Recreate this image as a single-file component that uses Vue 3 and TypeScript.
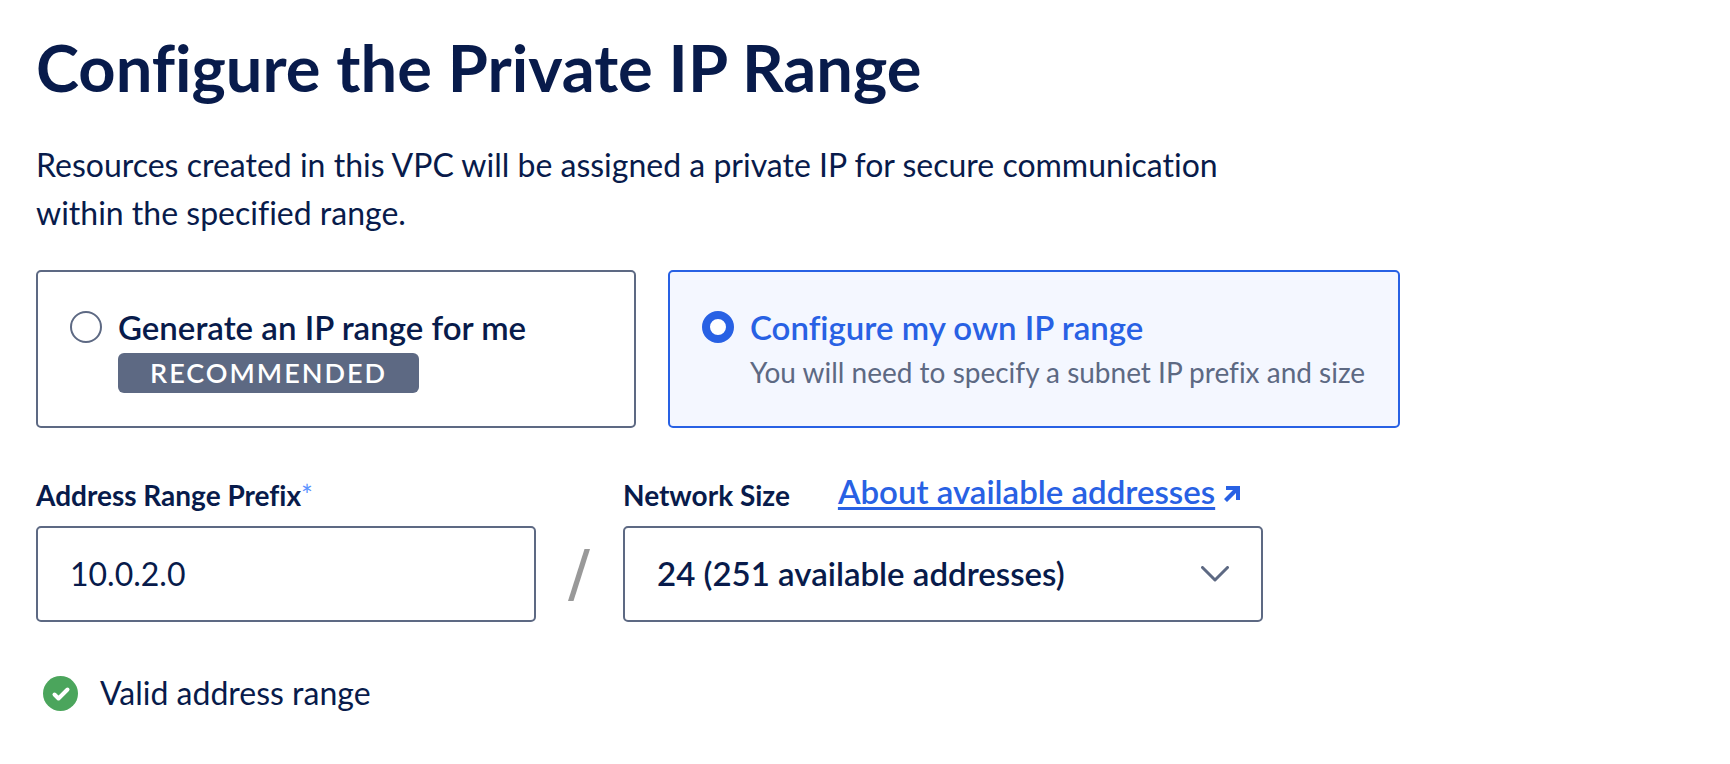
<script setup lang="ts">
import { ref } from 'vue'

type RangeMode = 'generate' | 'custom'

const mode = ref<RangeMode>('custom')
const prefix = ref('10.0.2.0')
const networkSize = ref(24)
const sizes = [
  { bits: 24, available: 251 },
  { bits: 25, available: 123 },
  { bits: 26, available: 59 },
]
</script>

<template>
  <main class="page">
    <h1 class="title">Configure the Private IP Range</h1>
    <p class="intro">
      Resources created in this VPC will be assigned a private IP for secure communication within the
      specified range.
    </p>

    <div class="options" role="radiogroup" aria-label="IP range">
      <label class="card" :class="{ selected: mode === 'generate' }">
        <input v-model="mode" class="radio" type="radio" name="mode" value="generate" />
        <span class="card-body">
          <span class="card-title">Generate an IP range for me</span>
          <span class="badge">RECOMMENDED</span>
        </span>
      </label>
      <label class="card" :class="{ selected: mode === 'custom' }">
        <input v-model="mode" class="radio" type="radio" name="mode" value="custom" />
        <span class="card-body">
          <span class="card-title">Configure my own IP range</span>
          <span class="card-note">You will need to specify a subnet IP prefix and size</span>
        </span>
      </label>
    </div>

    <div class="fields">
      <div class="field prefix-field">
        <div class="field-head">
          <label class="field-label" for="prefix">Address Range Prefix<span class="star">*</span></label>
        </div>
        <input id="prefix" v-model="prefix" class="control" type="text" />
      </div>
      <svg class="slash" viewBox="0 0 24 54" aria-hidden="true">
        <path d="M17.5 1H23L6.500 53H1z" fill="#999" />
      </svg>
      <div class="field size-field">
        <div class="field-head">
          <label class="field-label" for="size">Network Size</label>
          <a class="link" href="#"><span class="link-text">About available addresses</span><svg class="arrow" viewBox="0 0 18 18" aria-hidden="true">
              <path d="M3 1H17V15H13V8L4 17L1 14L10 5H3z" fill="currentColor" />
            </svg></a>
        </div>
        <div class="select-wrap">
          <select id="size" v-model="networkSize" class="control select">
            <option v-for="s in sizes" :key="s.bits" :value="s.bits">
              {{ s.bits }} ({{ s.available }} available addresses)
            </option>
          </select>
          <svg class="chevron" viewBox="0 0 28 16" aria-hidden="true">
            <path d="M1.500 1.500L14 14L26.500 1.500" fill="none" stroke="#5d6983" stroke-width="3" stroke-linecap="round" stroke-linejoin="round" />
          </svg>
        </div>
      </div>
    </div>

    <p class="status" role="status">
      <svg class="check" viewBox="0 0 35 35" aria-hidden="true">
        <circle cx="17.500" cy="17.500" r="17.500" fill="#4ba55c" />
        <path d="M11.500 18.500L15.500 22.500L24.500 13.500" fill="none" stroke="#fff" stroke-width="4" stroke-linecap="round" stroke-linejoin="round" />
      </svg>
      <span>Valid address range</span>
    </p>
  </main>
</template>

<style>
body {
  margin: 0;
  background: #fff;
}
</style>

<style scoped>
.page {
  box-sizing: border-box;
  padding: 29px 36px;
  color: #081b4b;
  font-family: Lato, "Liberation Sans", sans-serif;
  font-size: 32px;
  line-height: 48px;
  font-variant-ligatures: none;
}
.title {
  margin: 0;
  font-size: 65px;
  line-height: 76px;
  font-weight: 700;
}
.intro {
  max-width: 1240px;
  margin: 36px 0 0;
}
.options {
  display: grid;
  grid-template-columns: minmax(0, 600px) minmax(0, 732px);
  gap: 32px;
  margin-top: 33px;
}
.card {
  box-sizing: border-box;
  display: flex;
  gap: 16px;
  min-height: 158px;
  padding: 31px 32px;
  border: 2px solid #5d6983;
  border-radius: 5px;
}
.card.selected {
  border-color: #2861e4;
  background: #f4f7ff;
}
.radio {
  appearance: none;
  box-sizing: border-box;
  flex: none;
  width: 32px;
  height: 32px;
  margin: 8px 0 0;
  border: 2px solid #5d6983;
  border-radius: 50%;
  background: #fff;
}
.radio:checked {
  border: 8px solid #2861e4;
}
.card-body {
  display: flex;
  flex-direction: column;
  align-items: flex-start;
  gap: 2px;
}
.card-title {
  font-size: 33px;
  font-weight: 600;
}
.selected .card-title {
  color: #2861e4;
}
.badge {
  padding: 0 32px;
  border-radius: 6px;
  background: #5d6983;
  color: #fff;
  font-size: 27px;
  line-height: 40px;
  font-weight: 600;
  letter-spacing: 2px;
}
.card-note {
  color: #5d6983;
  font-size: 28px;
  line-height: 38px;
  white-space: nowrap;
}
.fields {
  display: flex;
  align-items: flex-end;
  margin-top: 42px;
}
.field {
  min-width: 0;
}
.prefix-field {
  flex: 0 1 500px;
}
.size-field {
  flex: 0 1 640px;
}
.field-head {
  display: flex;
  align-items: flex-start;
  gap: 48px;
  height: 56px;
  white-space: nowrap;
}
.field-label {
  font-size: 28px;
  line-height: 50px;
  font-weight: 700;
}
.star {
  color: #5b93ff;
  font-weight: 400;
}
.link {
  display: inline-flex;
  align-items: center;
  gap: 8px;
  color: #2861e4;
  font-size: 33px;
  line-height: 42px;
  font-weight: 600;
  text-decoration: none;
}
.link-text {
  text-decoration: underline;
  text-decoration-thickness: 3px;
  text-underline-offset: 3px;
  text-decoration-skip-ink: none;
}
.arrow {
  width: 18px;
  height: 18px;
  margin-top: 6px;
}
.control {
  box-sizing: border-box;
  display: block;
  width: 100%;
  height: 96px;
  padding: 0 32px 2px;
  border: 2px solid #5d6983;
  border-radius: 5px;
  background: #fff;
  color: inherit;
  font: inherit;
}
.select {
  appearance: none;
  font-size: 33px;
  font-weight: 600;
}
.select-wrap {
  display: grid;
  align-items: center;
}
.select-wrap > * {
  grid-area: 1 / 1;
}
.chevron {
  justify-self: end;
  width: 28px;
  height: 16px;
  margin-right: 34px;
  pointer-events: none;
}
.slash {
  flex: none;
  width: 24px;
  height: 54px;
  margin: 0 32px 20px 31px;
}
.status {
  display: flex;
  align-items: center;
  gap: 22px;
  margin: 47px 0 0;
  padding-left: 7px;
}
.check {
  width: 35px;
  height: 35px;
}
</style>
